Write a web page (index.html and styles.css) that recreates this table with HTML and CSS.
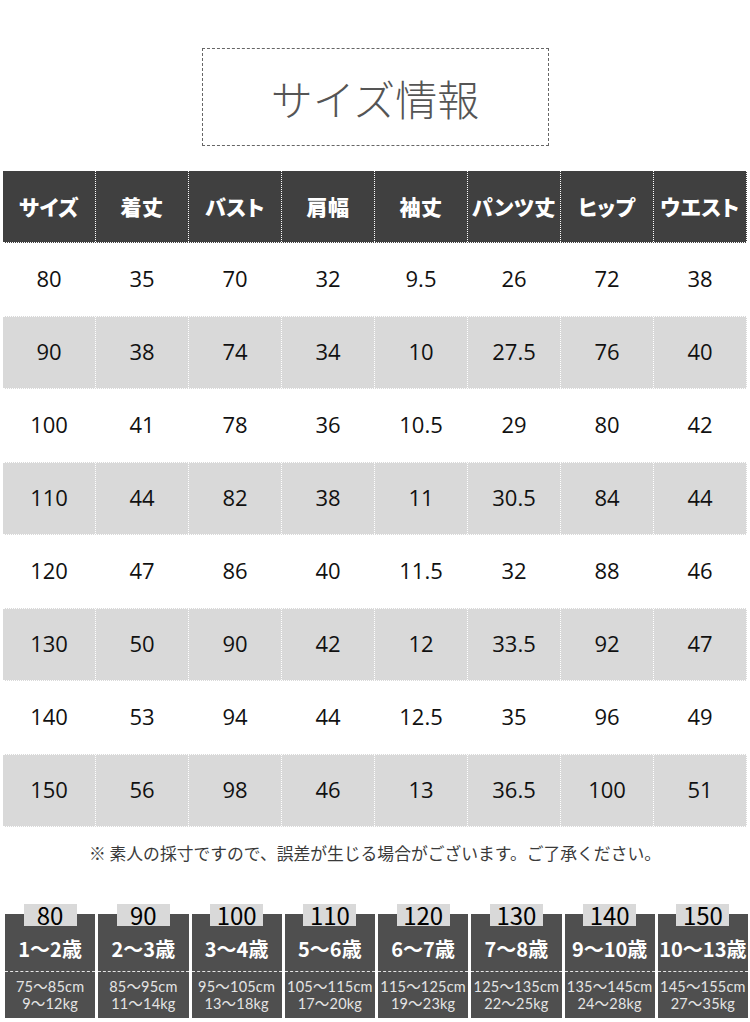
FILE: index.html
```html
<!DOCTYPE html>
<html lang="ja">
<head>
<meta charset="utf-8">
<title>サイズ情報</title>
<link rel="stylesheet" href="styles.css">
</head>
<body>
<main class="page">
  <div class="title-wrap">
    <h1 class="title">サイズ情報</h1>
  </div>

  <div class="size-table">
    <div class="row head">
      <div class="cell">サイズ</div><div class="cell">着丈</div><div class="cell">バスト</div><div class="cell">肩幅</div><div class="cell">袖丈</div><div class="cell">パンツ丈</div><div class="cell">ヒップ</div><div class="cell">ウエスト</div>
    </div>
    <div class="row">
      <div class="cell">80</div><div class="cell">35</div><div class="cell">70</div><div class="cell">32</div><div class="cell">9.5</div><div class="cell">26</div><div class="cell">72</div><div class="cell">38</div>
    </div>
    <div class="row alt">
      <div class="cell">90</div><div class="cell">38</div><div class="cell">74</div><div class="cell">34</div><div class="cell">10</div><div class="cell">27.5</div><div class="cell">76</div><div class="cell">40</div>
    </div>
    <div class="row">
      <div class="cell">100</div><div class="cell">41</div><div class="cell">78</div><div class="cell">36</div><div class="cell">10.5</div><div class="cell">29</div><div class="cell">80</div><div class="cell">42</div>
    </div>
    <div class="row alt">
      <div class="cell">110</div><div class="cell">44</div><div class="cell">82</div><div class="cell">38</div><div class="cell">11</div><div class="cell">30.5</div><div class="cell">84</div><div class="cell">44</div>
    </div>
    <div class="row">
      <div class="cell">120</div><div class="cell">47</div><div class="cell">86</div><div class="cell">40</div><div class="cell">11.5</div><div class="cell">32</div><div class="cell">88</div><div class="cell">46</div>
    </div>
    <div class="row alt">
      <div class="cell">130</div><div class="cell">50</div><div class="cell">90</div><div class="cell">42</div><div class="cell">12</div><div class="cell">33.5</div><div class="cell">92</div><div class="cell">47</div>
    </div>
    <div class="row">
      <div class="cell">140</div><div class="cell">53</div><div class="cell">94</div><div class="cell">44</div><div class="cell">12.5</div><div class="cell">35</div><div class="cell">96</div><div class="cell">49</div>
    </div>
    <div class="row alt">
      <div class="cell">150</div><div class="cell">56</div><div class="cell">98</div><div class="cell">46</div><div class="cell">13</div><div class="cell">36.5</div><div class="cell">100</div><div class="cell">51</div>
    </div>
  </div>

  <p class="note">※ 素人の採寸ですので、誤差が生じる場合がございます。ご了承ください。</p>

  <div class="cards">
    <div class="card"><div class="tab">80</div><div class="card-body"><div class="age">1〜2歳</div><div class="info"><span class="line">75〜85cm</span><span class="line">9〜12kg</span></div></div></div>
    <div class="card"><div class="tab">90</div><div class="card-body"><div class="age">2〜3歳</div><div class="info"><span class="line">85〜95cm</span><span class="line">11〜14kg</span></div></div></div>
    <div class="card"><div class="tab">100</div><div class="card-body"><div class="age">3〜4歳</div><div class="info"><span class="line">95〜105cm</span><span class="line">13〜18kg</span></div></div></div>
    <div class="card"><div class="tab">110</div><div class="card-body"><div class="age">5〜6歳</div><div class="info"><span class="line">105〜115cm</span><span class="line">17〜20kg</span></div></div></div>
    <div class="card"><div class="tab">120</div><div class="card-body"><div class="age">6〜7歳</div><div class="info"><span class="line">115〜125cm</span><span class="line">19〜23kg</span></div></div></div>
    <div class="card"><div class="tab">130</div><div class="card-body"><div class="age">7〜8歳</div><div class="info"><span class="line">125〜135cm</span><span class="line">22〜25kg</span></div></div></div>
    <div class="card"><div class="tab">140</div><div class="card-body"><div class="age">9〜10歳</div><div class="info"><span class="line">135〜145cm</span><span class="line">24〜28kg</span></div></div></div>
    <div class="card"><div class="tab">150</div><div class="card-body"><div class="age">10〜13歳</div><div class="info"><span class="line">145〜155cm</span><span class="line">27〜35kg</span></div></div></div>
  </div>
</main>
</body>
</html>
```

FILE: styles.css
```css
* { box-sizing: border-box; }

html, body {
  margin: 0;
  padding: 0;
  background: #ffffff;
}

body {
  font-family: "Noto Sans CJK JP", "Noto Sans", sans-serif;
  color: #222;
}

.page {
  width: 750px;
  overflow: hidden;
}

.title-wrap {
  display: flex;
  justify-content: center;
  padding-top: 48px;
}

.title {
  margin: 0;
  width: 347px;
  height: 98px;
  border: 1px dashed #666;
  display: flex;
  align-items: center;
  justify-content: center;
  font-size: 42px;
  font-weight: 300;
  color: #555;
}

.size-table {
  margin: 25px 0 0 3px;
  width: 744px;
}

.row {
  display: grid;
  grid-template-columns: repeat(8, 1fr);
  height: 73px;
}

.row.head {
  height: 72px;
  background: #404040;
  border-bottom: 1px dotted #ffffff;
}

.row.alt {
  background: #d9d9d9;
  border-top: 1px dotted #ffffff;
  border-bottom: 1px dotted #ffffff;
}

.cell {
  display: flex;
  align-items: center;
  justify-content: center;
  padding-bottom: 3px;
  border-right: 1px dotted #ffffff;
  font-family: "Open Sans", "Noto Sans", sans-serif;
  font-size: 22px;
  color: #111;
}

.head .cell {
  padding-bottom: 2px;
  font-family: "Noto Sans CJK JP", sans-serif;
  font-weight: 900;
  font-size: 21px;
  color: #ffffff;
  font-feature-settings: "palt";
  letter-spacing: 0.5px;
}

.note {
  margin: 14px 0 0;
  text-align: center;
  font-size: 16.8px;
  line-height: 24px;
  font-weight: 400;
  color: #3a3a3a;
}

.cards {
  display: flex;
  gap: 3px;
  margin-top: 39px;
  padding: 0 2px 0 5px;
}

.card {
  flex: 1;
  display: flex;
  flex-direction: column;
  align-items: center;
}

.tab {
  position: relative;
  z-index: 1;
  width: 53px;
  height: 22px;
  margin-bottom: -12px;
  background: #d9d9d9;
  font-size: 24px;
  line-height: 22px;
  text-align: center;
  color: #000;
}

.card-body {
  width: 100%;
  background: #4f4f4f;
  padding-top: 12px;
}

.age {
  height: 45px;
  line-height: 45px;
  text-align: center;
  font-size: 20px;
  font-weight: 700;
  color: #ffffff;
  white-space: nowrap;
}

.info {
  border-top: 1px dashed #e6e6e6;
  height: 47px;
  padding-top: 6px;
  display: flex;
  flex-direction: column;
  align-items: center;
}

.line {
  display: block;
  height: 17px;
  font-family: "Lato", "Noto Sans CJK JP", sans-serif;
  font-size: 14.5px;
  line-height: 17px;
  font-weight: 400;
  color: #e4e4e4;
  white-space: nowrap;
  letter-spacing: 0.2px;
}
```
